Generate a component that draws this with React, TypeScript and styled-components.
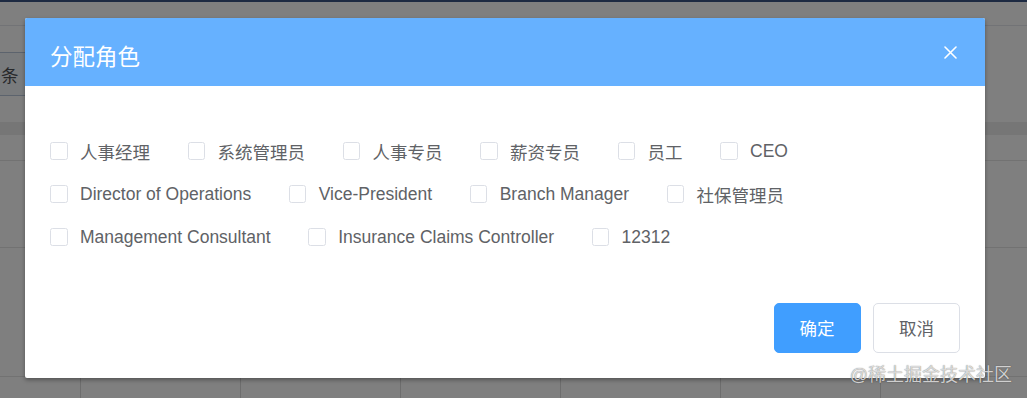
import styled, { createGlobalStyle } from "styled-components";

const GlobalStyle = createGlobalStyle`
  html, body {
    margin: 0;
    padding: 0;
  }
  body {
    font-family: "Liberation Sans", "Noto Sans CJK SC", sans-serif;
    background: #ffffff;
    overflow: hidden;
  }
`;

const Page = styled.div`
  position: relative;
  width: 1027px;
  height: 398px;
  overflow: hidden;
  background: #ffffff;
`;

const NavEdge = styled.div`
  height: 2px;
  background: #3a5585;
`;

const Toolbar = styled.div`
  height: 23px;
  border-bottom: 1px solid #e4e7ed;
`;

const PagerRow = styled.div`
  padding-top: 26px;
`;

const SizeBox = styled.div`
  display: flex;
  align-items: center;
  width: 60px;
  height: 42px;
  margin-left: -30px;
  padding-left: 30px;
  border: 1px solid #b8c6da;
  background: #f3f6fa;
  color: #505257;
  font-size: 17.5px;
`;

const Band = styled.div`
  margin-top: 26px;
  height: 13px;
  background: #ececec;
`;

const Row = styled.div<{ $h: number; $cols?: boolean }>`
  display: grid;
  grid-template-columns: 81px repeat(6, 160px);
  height: ${(p) => p.$h}px;
  border-bottom: 1px solid #e4e4e4;

  & > div {
    border-right: ${(p) => (p.$cols ? "1px solid #dadada" : "none")};
  }
`;

const Mask = styled.div`
  position: absolute;
  inset: 0;
  background: rgba(0, 0, 0, 0.5);
`;

const Dialog = styled.div`
  position: absolute;
  left: 25px;
  top: 18px;
  width: 960px;
  background: #ffffff;
  border-radius: 2px;
  box-shadow: 0 2px 4px rgba(0, 0, 0, 0.35);
  overflow: hidden;
`;

const Header = styled.div`
  position: relative;
  background: #66b1ff;
  padding: 25px 25px 12.5px;
`;

const Title = styled.span`
  display: block;
  color: #ffffff;
  font-size: 22.5px;
  line-height: 30px;
`;

const CloseButton = styled.button`
  position: absolute;
  top: 24px;
  right: 25px;
  width: 20px;
  height: 20px;
  padding: 0;
  border: 0;
  background: none;
  display: flex;
  align-items: center;
  justify-content: center;
  cursor: pointer;
`;

const Body = styled.div`
  padding: 44px 25px 31px;
`;

const Group = styled.div`
  display: flex;
  flex-wrap: wrap;
`;

const Option = styled.label`
  display: inline-flex;
  align-items: center;
  height: 43px;
  margin-right: 37.5px;
  color: #606266;
  font-size: 17.5px;
  white-space: nowrap;
  cursor: pointer;
`;

const Box = styled.span`
  flex-shrink: 0;
  width: 17.5px;
  height: 17.5px;
  box-sizing: border-box;
  margin-right: 12.5px;
  border: 1px solid #dcdfe6;
  border-radius: 2.5px;
  background: #ffffff;
`;

const Footer = styled.div`
  display: flex;
  justify-content: flex-end;
  gap: 12.5px;
  padding: 13px 25px 25px;
`;

const Button = styled.button<{ $primary?: boolean }>`
  height: 50px;
  padding: 0 25px;
  font-family: inherit;
  font-size: 17.5px;
  border-radius: 5px;
  border: 1px solid ${(p) => (p.$primary ? "#409eff" : "#dcdfe6")};
  background: ${(p) => (p.$primary ? "#409eff" : "#ffffff")};
  color: ${(p) => (p.$primary ? "#ffffff" : "#606266")};
  cursor: pointer;
`;

const Watermark = styled.div`
  position: absolute;
  right: 15px;
  bottom: 11px;
  font-size: 18px;
  line-height: 24px;
  color: rgba(235, 235, 235, 0.85);
  text-shadow: 0 0 1px rgba(0, 0, 0, 0.6);
`;

const roles = [
  "人事经理",
  "系统管理员",
  "人事专员",
  "薪资专员",
  "员工",
  "CEO",
  "Director of Operations",
  "Vice-President",
  "Branch Manager",
  "社保管理员",
  "Management Consultant",
  "Insurance Claims Controller",
  "12312",
];

const cells = Array.from({ length: 7 });

export default function App() {
  return (
    <>
      <GlobalStyle />
      <Page>
        <NavEdge />
        <Toolbar />
        <PagerRow>
          <SizeBox>条</SizeBox>
        </PagerRow>
        <Band />
        <Row $h={25} />
        <Row $h={86} />
        <Row $h={128} />
        <Row $h={30} $cols>
          {cells.map((_, i) => (
            <div key={i} />
          ))}
        </Row>

        <Mask>
          <Dialog>
            <Header>
              <Title>分配角色</Title>
              <CloseButton aria-label="关闭">
                <svg width="13" height="13" viewBox="0 0 13 13">
                  <path
                    d="M1 1 L12 12 M12 1 L1 12"
                    stroke="#ffffff"
                    strokeWidth="1.6"
                    strokeLinecap="round"
                  />
                </svg>
              </CloseButton>
            </Header>
            <Body>
              <Group>
                {roles.map((role) => (
                  <Option key={role}>
                    <Box />
                    {role}
                  </Option>
                ))}
              </Group>
            </Body>
            <Footer>
              <Button $primary>确定</Button>
              <Button>取消</Button>
            </Footer>
          </Dialog>
        </Mask>
        <Watermark>@稀土掘金技术社区</Watermark>
      </Page>
    </>
  );
}
